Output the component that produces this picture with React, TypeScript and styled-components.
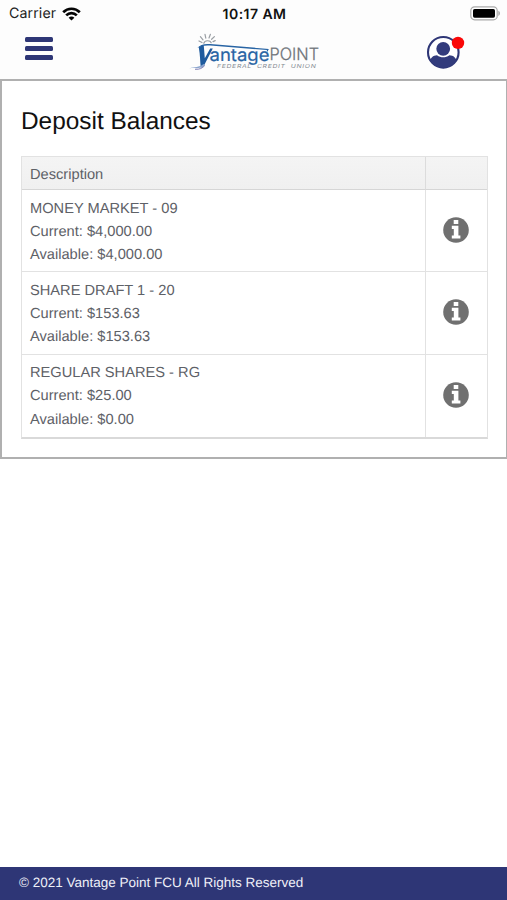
import React from "react";
import styled, { createGlobalStyle } from "styled-components";

const GlobalStyle = createGlobalStyle`
  * { box-sizing: border-box; }
  html, body { margin: 0; padding: 0; background: #fff; }
  body { font-family: "Liberation Sans", Arial, sans-serif; text-rendering: geometricPrecision; }
`;

const Screen = styled.div`
  display: flex;
  flex-direction: column;
  width: 100%;
  height: 900px;
  overflow: hidden;
  background: #fff;
`;

const StatusBar = styled.div`
  display: grid;
  grid-template-columns: 1fr auto 1fr;
  align-items: center;
  height: 27px;
  flex: none;
  padding: 0 6px 0 9px;
  background: #fdfdfd;
  font-family: Inter, sans-serif;
  color: #222;
`;

const Carrier = styled.div`
  display: flex;
  align-items: center;
  gap: 6px;
  font-size: 14.2px;
  letter-spacing: 0.1px;
`;

const Clock = styled.div`
  padding: 1px 1px 0 0;
  font-size: 14px;
  font-weight: 600;
  letter-spacing: 0.45px;
  color: #111;
`;

const Battery = styled.div`
  display: flex;
  justify-content: flex-end;
  svg { display: block; }
`;

const Header = styled.header`
  display: grid;
  grid-template-columns: 180px 150px 1fr;
  height: 52px;
  flex: none;
  background: #fdfdfd;
`;

const MenuButton = styled.button`
  display: flex;
  flex-direction: column;
  gap: 4px;
  width: 53px;
  padding: 10px 0 0 25px;
  border: 0;
  background: none;
`;

const MenuLine = styled.span`
  width: 28px;
  height: 5px;
  border-radius: 1.5px;
  background: #2e3676;
`;

const Profile = styled.div`
  padding: 7px 0 0 96px;
  svg { display: block; }
`;

const Panel = styled.main`
  height: 380px;
  flex: none;
  padding: 26px 18px 0 19px;
  border: 2px solid #b0b0b0;
  border-right-width: 1px;
`;

const Title = styled.h1`
  margin: 0;
  height: 49px;
  font-size: 24.4px;
  line-height: 29px;
  font-weight: 400;
  color: #111;
`;

const Table = styled.table`
  width: 467px;
  height: 283px;
  table-layout: fixed;
  border-collapse: separate;
  border-spacing: 0;
  border: 1px solid #e2e2e2;
  border-bottom: 2px solid #d9d9d9;
  color: #5e6167;
  font-size: 14.65px;
`;

const HeadCell = styled.th<{ $narrow?: boolean }>`
  width: ${(p) => (p.$narrow ? "62px" : "auto")};
  height: 33px;
  padding: 3px 0 0 8px;
  background: linear-gradient(#f4f4f4, #f0f0f0);
  border-bottom: 1px solid #d6d6d6;
  border-left: ${(p) => (p.$narrow ? "1px solid #dcdcdc" : "0")};
  text-align: left;
  font-weight: 400;
`;

const Cell = styled.td`
  padding: 7.5px 0 0 8px;
  height: 82.3px;
  vertical-align: top;
  tr:not(:last-child) > & { border-bottom: 1px solid #e2e2e2; }
`;

const InfoCell = styled(Cell)`
  padding: 0;
  vertical-align: middle;
  border-left: 1px solid #e2e2e2;
  svg { display: block; margin: -2px 0 0 17px; }
`;

const Line = styled.div`
  line-height: 23.3px;
`;

const Footer = styled.footer`
  height: 33px;
  flex: none;
  margin-top: auto;
  padding-left: 19px;
  background: #2e3676;
  color: #eef0f8;
  font-size: 13.5px;
  line-height: 31px;
`;

const accounts = [
  { name: "MONEY MARKET - 09", current: "$4,000.00", available: "$4,000.00" },
  { name: "SHARE DRAFT 1 - 20", current: "$153.63", available: "$153.63" },
  { name: "REGULAR SHARES - RG", current: "$25.00", available: "$0.00" },
];

function WifiIcon() {
  return (
    <svg width="19" height="14" viewBox="0 0 19 14" fill="none" stroke="#050505" strokeWidth="2.7">
      <path d="M1.2 5.2C5.8.6 13.2.6 17.8 5.2" />
      <path d="M4.2 8.4c3-3 7.6-3 10.6 0" />
      <path d="M9.5 13.6 6.6 10.8c1.6-1.6 4.2-1.6 5.8 0z" fill="#050505" stroke="none" />
    </svg>
  );
}

function BatteryIcon() {
  return (
    <svg width="31" height="15" viewBox="0 0 31 15">
      <rect x=".8" y=".8" width="26.4" height="13" rx="3.8" fill="#fff" stroke="#aaa" strokeWidth="1.2" />
      <rect x="3" y="3" width="22" height="8.7" rx="1.6" fill="#000" />
      <path d="M28.3 4.7c2.2 1 2.2 4.2 0 5.2z" fill="#aaa" />
    </svg>
  );
}

function InfoIcon() {
  return (
    <svg width="26" height="26" viewBox="0 0 26 26">
      <circle cx="13" cy="13" r="12.8" fill="#707070" />
      <path d="M10.7 2.9h4.6v4h-4.6zM8.8 8.8h6.6v9.6h2v3.2H8.8v-3.2h2v-6.4h-2z" fill="#fff" />
    </svg>
  );
}

function Logo() {
  return (
    <svg width="150" height="52" viewBox="180 27 150 52">
      <g stroke="#9a9fa4" strokeWidth="1.2" fill="none" strokeLinecap="round">
        <path d="M202 42.5 199 41M203 39.8 200.4 36.6M205.8 38.2 205 34.4M209 38 210.4 34.3M211.6 39.3 214.4 36.6M213 41.6 215.2 40.6" />
        <path d="M203.8 43.3c1-3.2 6.2-3.4 7.4-.6" />
      </g>
      <path d="M197.3 48.2c2.8-3.9 7.5-4.6 13-4.1l58.5 4.8-1.4 3.2-.7-2.1-56.4-4.4c-6.5-.5-9.6.6-13 2.6z" fill="#2864a4" />
      <path d="M198.8 47.5c2-1.8 3.8-2.2 5-1.7l1 12.4 5.4-9.6h2.6l-8.4 16.2c-1.6 2.4-3.2 2.9-3.6 2.9-.7-5.5-.6-13-2-20.2z" fill="#1f5b9e" />
      <path d="M189.3 68.4c5.5-2.3 9.5-.4 14.2-4.5l1.5 1.4c-5 4.4-9.7 2.1-15.7 3.1z" fill="#8ba5ce" />
      <path d="M195 69.3c4.7.3 7.4-1.1 9.8-3.8" stroke="#8584b8" fill="none" />
      <text x="209.5" y="61" fontFamily="Inter, sans-serif" fontWeight="400" fontSize="17.5" fill="#2864a4" stroke="#2864a4" strokeWidth=".2" textLength="60" lengthAdjust="spacingAndGlyphs">antage</text>
      <text x="269.5" y="60" fontFamily="Inter, sans-serif" fontSize="17" fontWeight="300" fill="#6e7379" stroke="#6e7379" strokeWidth=".25" textLength="49.5" lengthAdjust="spacingAndGlyphs">POINT</text>
      <text x="217" y="68.4" fontFamily="Inter, sans-serif" fontStyle="italic" fontSize="5.6" fill="#858b92" textLength="99.5" lengthAdjust="spacingAndGlyphs" letterSpacing=".6" wordSpacing="2">FEDERAL CREDIT UNION</text>
    </svg>
  );
}

function ProfileIcon() {
  return (
    <svg width="42" height="38" viewBox="0 0 42 38">
      <defs>
        <clipPath id="avatar"><circle cx="17.3" cy="18.3" r="15.5" /></clipPath>
      </defs>
      <circle cx="17.3" cy="18.3" r="15.3" fill="#fff" stroke="#2e3676" strokeWidth="2.1" />
      <g clipPath="url(#avatar)" fill="#323b7c">
        <circle cx="17.2" cy="14.8" r="6.9" />
        <path d="M4 35V28c0-4 3.2-6.8 7-6.8 3.9 2.8 8.5 2.8 12.4 0 4 0 7.2 2.8 7.2 6.8v7z" />
      </g>
      <circle cx="32" cy="8.9" r="6.2" fill="#fa0808" />
    </svg>
  );
}

export default function App() {
  return (
    <Screen>
      <GlobalStyle />
      <StatusBar>
        <Carrier>Carrier <WifiIcon /></Carrier>
        <Clock>10:17 AM</Clock>
        <Battery><BatteryIcon /></Battery>
      </StatusBar>
      <Header>
        <MenuButton aria-label="Menu"><MenuLine /><MenuLine /><MenuLine /></MenuButton>
        <Logo />
        <Profile><ProfileIcon /></Profile>
      </Header>
      <Panel>
        <Title>Deposit Balances</Title>
        <Table>
          <thead>
            <tr><HeadCell>Description</HeadCell><HeadCell $narrow /></tr>
          </thead>
          <tbody>
            {accounts.map((a) => (
              <tr key={a.name}>
                <Cell>
                  <Line>{a.name}</Line>
                  <Line>Current: {a.current}</Line>
                  <Line>Available: {a.available}</Line>
                </Cell>
                <InfoCell><InfoIcon /></InfoCell>
              </tr>
            ))}
          </tbody>
        </Table>
      </Panel>
      <Footer>© 2021 Vantage Point FCU All Rights Reserved</Footer>
    </Screen>
  );
}
